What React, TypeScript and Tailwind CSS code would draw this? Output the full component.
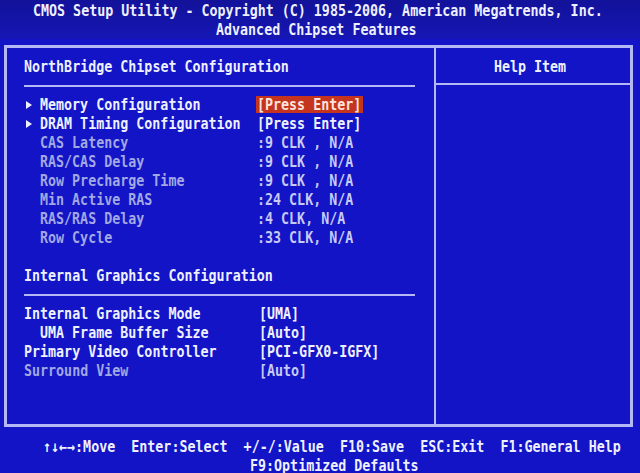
const FONT = "font-['DejaVu_Sans_Mono','Liberation_Mono',monospace]";

type Tone = 'bright' | 'soft' | 'dim';

const toneClass = (tone: Tone) => {
  if (tone === 'bright') return 'text-[#eef0ff]';
  if (tone === 'soft') return 'text-[#c6caf4]';
  return 'text-[#a2a8e4]';
};

// one 19px text-mode row; glyphs are stretched a bit to get the tall BIOS look
const Glyphs = ({children, className = ''}: {children: React.ReactNode; className?: string}) => (
  <span className={`inline-block origin-center scale-y-[1.2] whitespace-pre ${className}`}>{children}</span>
);

const Arrow = () => (
  <svg width="8" height="10" viewBox="0 0 8 10" className="shrink-0">
    <path d="M1 1 L7 5 L1 9 Z" fill="#eef0ff" />
  </svg>
);

type Item = {
  label: string;
  value: string;
  tone: Tone;
  valueTone?: Tone;
  submenu?: boolean;
  indent?: boolean;
  selected?: boolean;
};

const northBridge: Item[] = [
  {label: 'Memory Configuration', value: '[Press Enter]', tone: 'bright', submenu: true, selected: true},
  {label: 'DRAM Timing Configuration', value: '[Press Enter]', tone: 'bright', submenu: true},
  {label: 'CAS Latency', value: ':9 CLK , N/A', tone: 'dim', valueTone: 'soft'},
  {label: 'RAS/CAS Delay', value: ':9 CLK , N/A', tone: 'dim', valueTone: 'soft'},
  {label: 'Row Precharge Time', value: ':9 CLK , N/A', tone: 'dim', valueTone: 'soft'},
  {label: 'Min Active RAS', value: ':24 CLK, N/A', tone: 'dim', valueTone: 'soft'},
  {label: 'RAS/RAS Delay', value: ':4 CLK, N/A', tone: 'dim', valueTone: 'soft'},
  {label: 'Row Cycle', value: ':33 CLK, N/A', tone: 'dim', valueTone: 'soft'},
];

const graphics: Item[] = [
  {label: 'Internal Graphics Mode', value: '[UMA]', tone: 'bright'},
  {label: 'UMA Frame Buffer Size', value: '[Auto]', tone: 'bright', indent: true},
  {label: 'Primary Video Controller', value: '[PCI-GFX0-IGFX]', tone: 'bright'},
  {label: 'Surround View', value: '[Auto]', tone: 'dim', valueTone: 'soft'},
];

const MenuRow = ({item}: {item: Item}) => (
  <div className="flex h-[19px] items-center">
    <div className="flex w-[16px] items-center pl-[1px]">{item.submenu && <Arrow />}</div>
    <div className="flex w-[216px] items-center">
      <Glyphs className={toneClass(item.tone)}>{item.label}</Glyphs>
    </div>
    {item.selected ? (
      <span className="flex h-[17px] items-center bg-[#c4341f] pl-[1px] pr-[2px]">
        <Glyphs className="text-[#fbe4dc]">{item.value}</Glyphs>
      </span>
    ) : (
      <Glyphs className={`pl-[1px] ${toneClass(item.valueTone ?? item.tone)}`}>{item.value}</Glyphs>
    )}
  </div>
);

const OptionRow = ({item}: {item: Item}) => (
  <div className="flex h-[19px] items-center">
    <div className="flex w-[233px] items-center">
      <Glyphs className={`${toneClass(item.tone)} ${item.indent ? 'pl-[16px]' : ''}`}>{item.label}</Glyphs>
    </div>
    <Glyphs className={`pl-[2px] ${toneClass(item.valueTone ?? item.tone)}`}>{item.value}</Glyphs>
  </div>
);

const SectionTitle = ({title}: {title: string}) => (
  <>
    <div className="flex h-[19px] items-center">
      <Glyphs className="text-[#eef0ff]">{title}</Glyphs>
    </div>
    <div className="flex h-[19px] items-center">
      <div className="h-[2px] w-[391px] bg-[#b4b9f6]" />
    </div>
  </>
);

const SettingsPanel = () => (
  <div className="flex w-[427px] flex-col pl-[17px] pt-[9px]">
    <SectionTitle title="NorthBridge Chipset Configuration" />
    {northBridge.map(item => (
      <MenuRow key={item.label} item={item} />
    ))}
    <div className="h-[19px]" />
    <SectionTitle title="Internal Graphics Configuration" />
    {graphics.map(item => (
      <OptionRow key={item.label} item={item} />
    ))}
  </div>
);

const HelpPanel = () => (
  <div className="flex flex-1 flex-col border-l-2 border-[#b4b9f6] pt-[9px]">
    <div className="flex h-[19px] items-center justify-center pr-[6px]">
      <Glyphs className="text-[#eef0ff]">Help Item</Glyphs>
    </div>
    <div className="mt-[7px] h-[2px] w-full bg-[#b4b9f6]" />
  </div>
);

const Header = () => (
  <div className="bg-gradient-to-b from-[#12129a] to-[#1616b4] pt-[1px]">
    <div className="flex h-[19px] items-center pl-[33px]">
      <Glyphs className="text-[#eef0ff]">CMOS Setup Utility - Copyright (C) 1985-2006, American Megatrends, Inc.</Glyphs>
    </div>
    <div className="flex h-[19px] items-center pl-[216px]">
      <Glyphs className="text-[#eef0ff]">Advanced Chipset Features</Glyphs>
    </div>
  </div>
);

const Footer = () => (
  <div className="pt-[10px]">
    <div className="flex h-[19px] items-center pl-[43px]">
      <Glyphs className="text-[#eef0ff]">{'↑↓←→:Move  Enter:Select  +/-/:Value  F10:Save  ESC:Exit  F1:General Help'}</Glyphs>
    </div>
    <div className="flex h-[19px] items-center pl-[250px]">
      <Glyphs className="text-[#eef0ff]">F9:Optimized Defaults</Glyphs>
    </div>
  </div>
);

const App = () => {
  return (
    <div className={`h-[473px] w-[640px] overflow-hidden bg-[#1214c6] text-[13.33px] font-bold leading-none ${FONT}`}>
      <Header />
      <div className="mx-[4px] mt-[6px] flex h-[382px] w-[629px] border-[3px] border-[#b4b9f6]">
        <SettingsPanel />
        <HelpPanel />
      </div>
      <Footer />
    </div>
  );
};

export default App;
